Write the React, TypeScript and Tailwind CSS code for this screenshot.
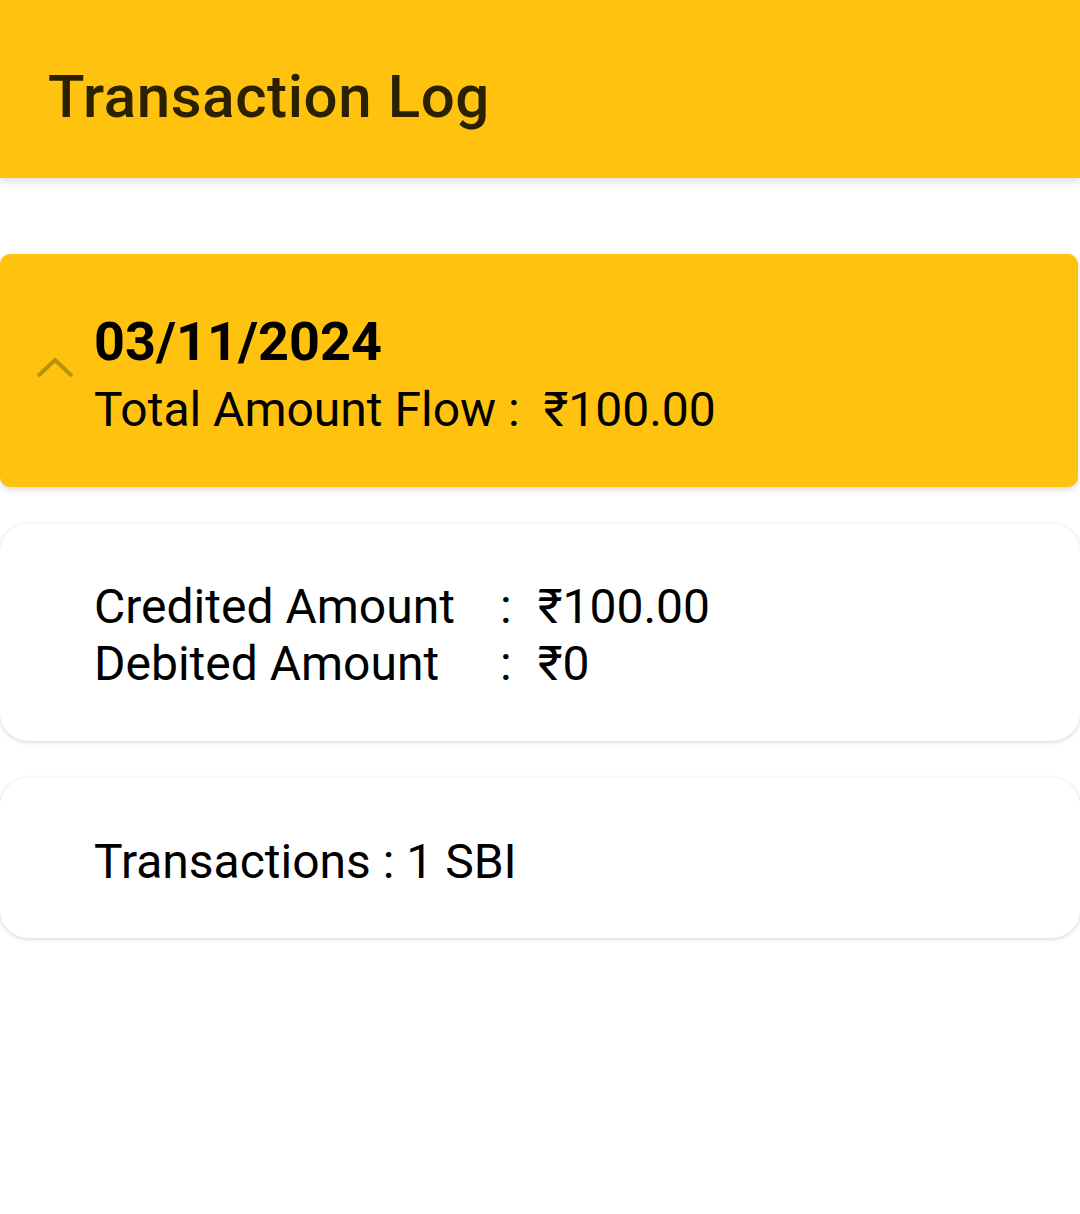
import React from "react";

const font = { fontFamily: "Roboto, 'Noto Sans', Arial, sans-serif" };

function ChevronUp() {
  return (
    <svg width="40" height="24" viewBox="0 0 40 24" fill="none">
      <polyline
        points="3,21 20,5 37,21"
        stroke="#b8920a"
        strokeWidth="4"
        strokeLinecap="butt"
        strokeLinejoin="miter"
      />
    </svg>
  );
}

export default function App() {
  return (
    <div className="min-h-[1214px] w-[1080px] bg-white" style={font}>
      <header className="relative z-10 flex h-[178px] items-center bg-[#ffc20e] pl-[48px] pt-[16px] shadow-[0_4px_8px_rgba(0,0,0,0.12)]">
        <h1 className="text-[60px] font-medium leading-none tracking-[0.6px] text-[#2b2100]">
          Transaction Log
        </h1>
      </header>

      <div className="mt-[76px] space-y-[37px]">
        <div className="mr-[2px] flex h-[233px] rounded-[10px] bg-[#ffc20e] shadow-[0_3px_6px_rgba(0,0,0,0.14)]">
          <div className="flex w-[94px] shrink-0 items-start justify-start pl-[35px] pt-[101px]">
            <ChevronUp />
          </div>
          <div className="pt-[56px] text-black">
            <div className="text-[54px] font-bold leading-[64px]">03/11/2024</div>
            <div className="mt-[8px] text-[48px] leading-[56px]">
              Total Amount Flow :&nbsp; ₹100.00
            </div>
          </div>
        </div>

        <div className="h-[217px] rounded-[28px] bg-white pl-[94px] pt-[54px] text-black shadow-[0_1px_4px_rgba(0,0,0,0.18)]">
          <div className="grid grid-cols-[406px_auto_1fr] text-[48px] leading-[57px]">
            <span>Credited Amount</span>
            <span className="pr-[26px]">:</span>
            <span>₹100.00</span>
            <span>Debited Amount</span>
            <span className="pr-[26px]">:</span>
            <span>₹0</span>
          </div>
        </div>

        <div className="h-[160px] rounded-[28px] bg-white pl-[94px] pt-[55px] text-black shadow-[0_1px_4px_rgba(0,0,0,0.18)]">
          <div className="text-[48px] leading-[57px]">Transactions : 1 SBI</div>
        </div>
      </div>
    </div>
  );
}
